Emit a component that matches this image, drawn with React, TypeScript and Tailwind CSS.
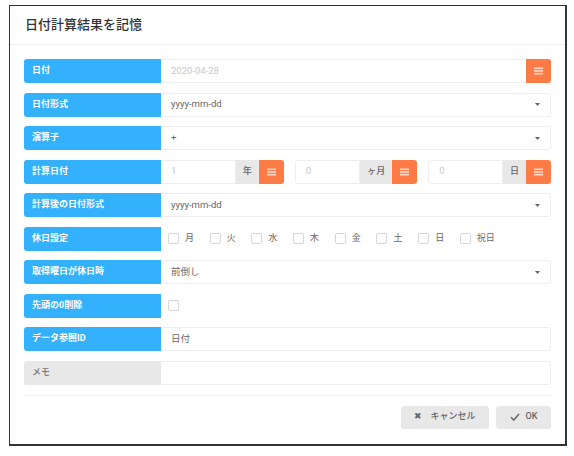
import React from "react";

const font = { fontFamily: 'Roboto, "Noto Sans CJK JP", "Noto Sans", sans-serif' };

function Bars() {
  return (
    <svg width="9" height="8" viewBox="0 0 9 8" fill="none">
      <rect x="0" y="0.5" width="9" height="1.6" fill="#ffd9c8" />
      <rect x="0" y="3.2" width="9" height="1.6" fill="#ffd9c8" />
      <rect x="0" y="5.9" width="9" height="1.6" fill="#ffd9c8" />
    </svg>
  );
}

function OrangeBtn() {
  return (
    <div className="w-[25px] h-full bg-[#ff7b45] rounded-r-[3px] flex items-center justify-center shrink-0">
      <Bars />
    </div>
  );
}

function Caret() {
  return (
    <svg width="5" height="3" viewBox="0 0 5 3" className="ml-auto mr-[10px]">
      <path d="M0 0 L5 0 L2.5 3 Z" fill="#666" />
    </svg>
  );
}

function Label({ text, gray }: { text: string; gray?: boolean }) {
  return (
    <div
      className={`w-[137px] shrink-0 h-full rounded-l-[3px] flex items-center pl-[8px] text-[9px] ${
        gray ? "bg-[#e8e8e8] text-[#777] font-medium" : "bg-[#33b1fd] text-white font-bold"
      }`}
    >
      {text}
    </div>
  );
}

function Box() {
  return <span className="w-[11px] h-[11px] border border-[#d6d6d6] rounded-[2px] bg-white shrink-0" />;
}

function Row({ children }: { children: React.ReactNode }) {
  return <div className="flex h-[24px]">{children}</div>;
}

function Field({ children, className = "" }: { children?: React.ReactNode; className?: string }) {
  return (
    <div className={`flex-1 h-full border border-[#eeeeee] border-l-0 flex items-center pl-[10px] text-[9.5px] text-[#666] ${className}`}>
      {children}
    </div>
  );
}

function NumGroup({ value, unit, first }: { value: string; unit: string; first?: boolean }) {
  return (
    <div className="flex-1 flex h-full">
      <div
        className={`flex-1 h-full border border-[#eeeeee] flex items-center pl-[10px] text-[9.5px] text-[#c8c8c8] ${
          first ? "border-l-0" : "rounded-l-[3px]"
        }`}
      >
        {value}
      </div>
      <div className="h-full bg-[#e8e8e8] flex items-center justify-center px-[7px] text-[9px] text-[#666] font-medium">
        {unit}
      </div>
      <OrangeBtn />
    </div>
  );
}

const days = ["月", "火", "水", "木", "金", "土", "日", "祝日"];

export default function App() {
  return (
    <div className="w-[574px] h-[456px] bg-white pt-[5px] pl-[9px]" style={font}>
      <div className="w-[558px] h-[441px] bg-white border border-[#333] border-r-[2px] border-b-[2px] flex flex-col">
        {/* Header */}
        <div className="h-[39px] border-b border-[#eeeeee] flex items-center pl-[15px] text-[13px] text-[#333] font-medium">
          日付計算結果を記憶
        </div>

        {/* Form */}
        <div className="flex flex-col gap-[9.5px] pt-[14px] pl-[14px] pr-[14px]">
          <Row>
            <Label text="日付" />
            <Field className="text-[#c8c8c8] pr-0">
              2020-04-28
              <div className="ml-auto h-[24px] -mr-px -my-px flex">
                <OrangeBtn />
              </div>
            </Field>
          </Row>
          <Row>
            <Label text="日付形式" />
            <Field className="rounded-r-[3px]">
              yyyy-mm-dd
              <Caret />
            </Field>
          </Row>
          <Row>
            <Label text="演算子" />
            <Field className="rounded-r-[3px]">
              +
              <Caret />
            </Field>
          </Row>
          <Row>
            <Label text="計算日付" />
            <div className="flex-1 flex gap-[11px] h-full">
              <NumGroup value="1" unit="年" first />
              <NumGroup value="0" unit="ヶ月" />
              <NumGroup value="0" unit="日" />
            </div>
          </Row>
          <Row>
            <Label text="計算後の日付形式" />
            <Field className="rounded-r-[3px]">
              yyyy-mm-dd
              <Caret />
            </Field>
          </Row>
          <Row>
            <Label text="休日設定" />
            <div className="flex-1 flex items-center pl-[7px] text-[9px] text-[#666]">
              {days.map((d) => (
                <div key={d} className="w-[41.7px] flex items-center gap-[6px]">
                  <Box />
                  <span>{d}</span>
                </div>
              ))}
            </div>
          </Row>
          <Row>
            <Label text="取得曜日が休日時" />
            <Field className="rounded-r-[3px]">
              前倒し
              <Caret />
            </Field>
          </Row>
          <Row>
            <Label text="先頭の0削除" />
            <div className="flex-1 flex items-center pl-[7px]">
              <Box />
            </div>
          </Row>
          <Row>
            <Label text="データ参照ID" />
            <Field className="rounded-r-[3px]">日付</Field>
          </Row>
          <Row>
            <Label text="メモ" gray />
            <Field className="rounded-r-[3px]" />
          </Row>
        </div>

        {/* Footer */}
        <div className="mx-[14px] mt-[10px] border-t border-[#eeeeee] pt-[10px] flex justify-end gap-[7px]">
          <button className="w-[88px] h-[23px] bg-[#e8e8e8] rounded-[3px] flex items-center justify-center gap-[8px] text-[9px] text-[#666] font-medium">
            <span className="text-[9px]">✖</span>
            <span>キャンセル</span>
          </button>
          <button className="w-[55px] h-[23px] bg-[#e8e8e8] rounded-[3px] flex items-center justify-center gap-[6px] text-[9px] text-[#666] font-medium">
            <svg width="10" height="8" viewBox="0 0 10 8">
              <path d="M1 4.2 L3.8 7 L9 1" stroke="#666" strokeWidth="1.6" fill="none" />
            </svg>
            <span>OK</span>
          </button>
        </div>
      </div>
    </div>
  );
}
